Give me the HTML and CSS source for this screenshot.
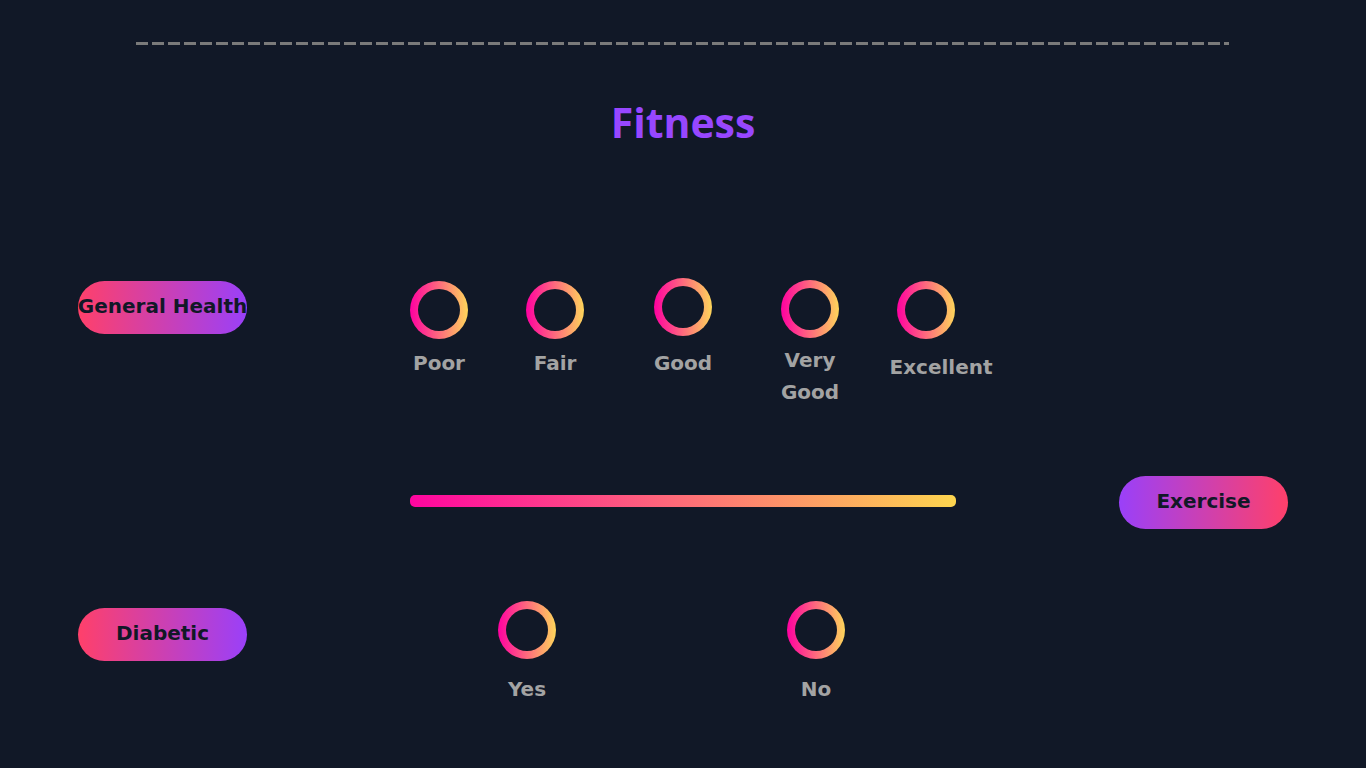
FILE: index.html
```html
<!DOCTYPE html>
<html lang="en">
<head>
    <meta charset="UTF-8">
    <meta name="viewport" content="width=device-width, initial-scale=1.0">
    <link rel="stylesheet" href="styles.css">
    <title>Fitness</title>
</head>
<body>

<div class="divider"></div>

<h1 class="title">Fitness</h1>

<!-- general health -->
<section class="row row-health">
    <span class="pill">General Health</span>
    <div class="choices">
        <div class="choice">
            <span class="ring"></span>
            <span class="choice-label">Poor</span>
        </div>
        <div class="choice">
            <span class="ring"></span>
            <span class="choice-label">Fair</span>
        </div>
        <div class="choice choice-good">
            <span class="ring"></span>
            <span class="choice-label">Good</span>
        </div>
        <div class="choice choice-very">
            <span class="ring"></span>
            <span class="choice-label">Very<br>Good</span>
        </div>
        <div class="choice choice-excellent">
            <span class="ring"></span>
            <span class="choice-label">Excellent</span>
        </div>
    </div>
</section>

<!-- exercise -->
<section class="row row-exercise">
    <div class="track"></div>
    <span class="pill pill-reverse">Exercise</span>
</section>

<!-- diabetic -->
<section class="row row-diabetic">
    <span class="pill">Diabetic</span>
    <div class="choices choices-yesno">
        <div class="choice">
            <span class="ring"></span>
            <span class="choice-label">Yes</span>
        </div>
        <div class="choice">
            <span class="ring"></span>
            <span class="choice-label">No</span>
        </div>
    </div>
</section>

</body>
</html>
```

FILE: styles.css
```css
body {
    margin: 0;
    background-color: #111827;
    font-family: 'DejaVu Sans', sans-serif;
}

.divider {
    height: 3px;
    margin: 42px 137px 0 136px;
    background: repeating-linear-gradient(90deg, #7a7a7a 0 12px, transparent 12px 16px);
}

.title {
    margin: 52px 0 0;
    font-family: 'Open Sans', sans-serif;
    font-weight: 700;
    font-size: 41px;
    line-height: 50px;
    text-align: center;
    color: #9747ff;
}

.row {
    display: flex;
    align-items: flex-start;
}

.pill {
    display: flex;
    align-items: center;
    justify-content: center;
    box-sizing: border-box;
    width: 169px;
    height: 53px;
    padding-bottom: 4px;
    border-radius: 27px;
    background: linear-gradient(90deg, #ff406a, #9a40f9);
    color: #111827;
    font-weight: 700;
    font-size: 20px;
    white-space: nowrap;
    flex-shrink: 0;
}

.pill-reverse {
    background: linear-gradient(90deg, #9a40f9, #ff406a);
}

.row-health {
    margin-top: 134px;
    padding-left: 78px;
}

.row-health .choices {
    margin-left: 163px;
}

.choices {
    display: flex;
    gap: 58px;
}

.choice {
    display: flex;
    flex-direction: column;
    align-items: center;
    width: 58px;
}

.ring {
    position: relative;
    display: block;
    width: 58px;
    height: 58px;
    border-radius: 50%;
    background: linear-gradient(90deg, #ff00a0, #fdd55a);
}

.ring::after {
    content: "";
    position: absolute;
    inset: 8px;
    border-radius: 50%;
    background-color: #111827;
}

.choice-label {
    margin-top: 8px;
    font-weight: 700;
    font-size: 20px;
    line-height: 32px;
    color: #a3a3a3;
    text-align: center;
    white-space: nowrap;
}

.choice-good {
    margin-left: 12px;
}

.choice-good .ring {
    margin-top: -3px;
}

.choice-good .choice-label {
    margin-top: 11px;
}

.choice-very {
    margin-left: 11px;
}

.choice-very .ring {
    margin-top: -1px;
}

.choice-very .choice-label {
    margin-top: 6px;
}

.choice-excellent .choice-label {
    margin-top: 12px;
    margin-left: 30px;
}

.row-exercise {
    align-items: center;
    margin-top: 68px;
    padding-left: 410px;
}

.track {
    width: 546px;
    height: 12px;
    margin-bottom: 3px;
    border-radius: 5px;
    background: linear-gradient(90deg, #ff05a0, #fdd54f);
}

.row-exercise .pill {
    margin-left: 163px;
}

.row-diabetic {
    margin-top: 72px;
    padding-left: 78px;
}

.row-diabetic .pill {
    margin-top: 7px;
}

.choices-yesno {
    margin-left: 251px;
    gap: 231px;
}

.choices-yesno .choice-label {
    margin-top: 14px;
}
```
